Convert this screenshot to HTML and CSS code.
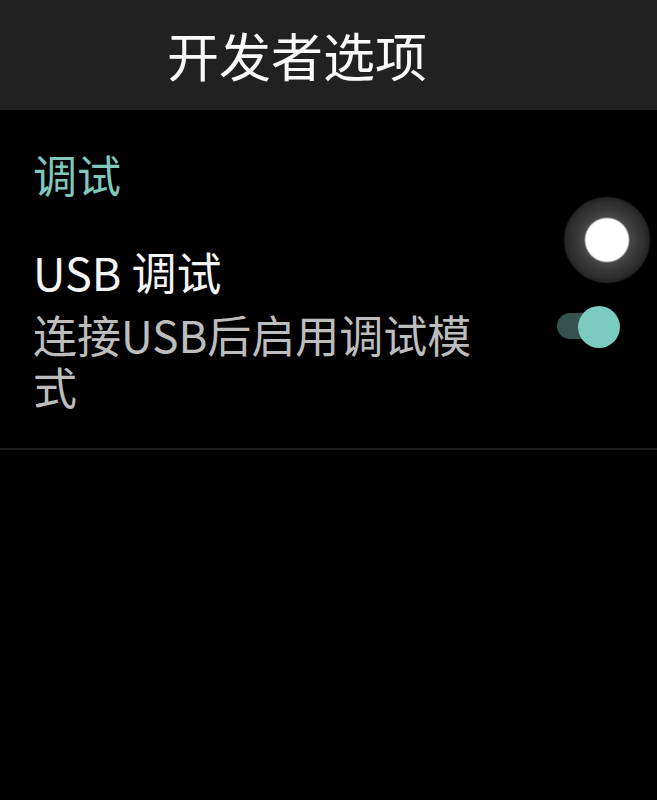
FILE: index.html
```html
<!DOCTYPE html>
<html lang="zh-CN">
  <head>
    <meta charset="UTF-8" />
    <meta name="viewport" content="width=device-width, initial-scale=1.0" />
    <title>开发者选项</title>
    <link rel="stylesheet" href="styles.css">
  </head>
  <body>
    <div class="app-bar">
      <h1>开发者选项</h1>
    </div>
    <div class="section-title">调试</div>
    <div class="pref">
      <div class="pref-text">
        <div class="pref-title">USB 调试</div>
        <div class="pref-summary">连接USB后启用调试模式</div>
      </div>
      <div class="switch-area">
        <div class="thumb-ghost"></div>
        <div class="toggle">
          <div class="track"></div>
          <div class="thumb"></div>
        </div>
      </div>
    </div>
  </body>
</html>
```

FILE: styles.css
```css
* {
  margin: 0;
  padding: 0;
  box-sizing: border-box;
}
body {
  width: 657px;
  height: 800px;
  background-color: #000;
  font-family: "Noto Sans CJK SC", "Noto Sans", sans-serif;
  overflow: hidden;
}
.app-bar {
  height: 110px;
  background-color: #212121;
  display: flex;
  align-items: center;
  padding-left: 167px;
}
.app-bar h1 {
  font-size: 52px;
  font-weight: 400;
  line-height: 52px;
  color: #fafafa;
}
.section-title {
  padding: 42px 33px 0;
  height: 86px;
  font-size: 44px;
  line-height: 44px;
  color: #7fc8bb;
}
.pref {
  display: flex;
  padding-left: 33px;
  padding-bottom: 36px;
  border-bottom: 2px solid #1d1d1d;
}
.pref-text {
  width: 460px;
}
.pref-title {
  margin-top: 50px;
  font-size: 45px;
  line-height: 52px;
  color: #f5f5f5;
}
.pref-summary {
  margin-top: 10px;
  font-size: 44px;
  line-height: 52px;
  color: #bdbdbd;
}
.switch-area {
  margin-left: auto;
  width: 100px;
  display: flex;
  flex-direction: column;
}
.thumb-ghost {
  width: 88px;
  height: 88px;
  margin-left: 6px;
  border-radius: 50%;
  background: radial-gradient(circle, #fff 0, #fff 21px, #474747 23px, #393939 30px, #2e2e2e 38px, #242424 42px, rgba(20, 20, 20, 0) 44px);
}
.toggle {
  position: relative;
  width: 63px;
  height: 42px;
  margin-top: 22px;
}
.track {
  position: absolute;
  left: 0;
  top: 7px;
  width: 50px;
  height: 26px;
  border-radius: 13px;
  background-color: #36524f;
}
.thumb {
  position: absolute;
  right: 0;
  top: 0;
  width: 42px;
  height: 42px;
  border-radius: 50%;
  background-color: #7ccbbf;
}
```
